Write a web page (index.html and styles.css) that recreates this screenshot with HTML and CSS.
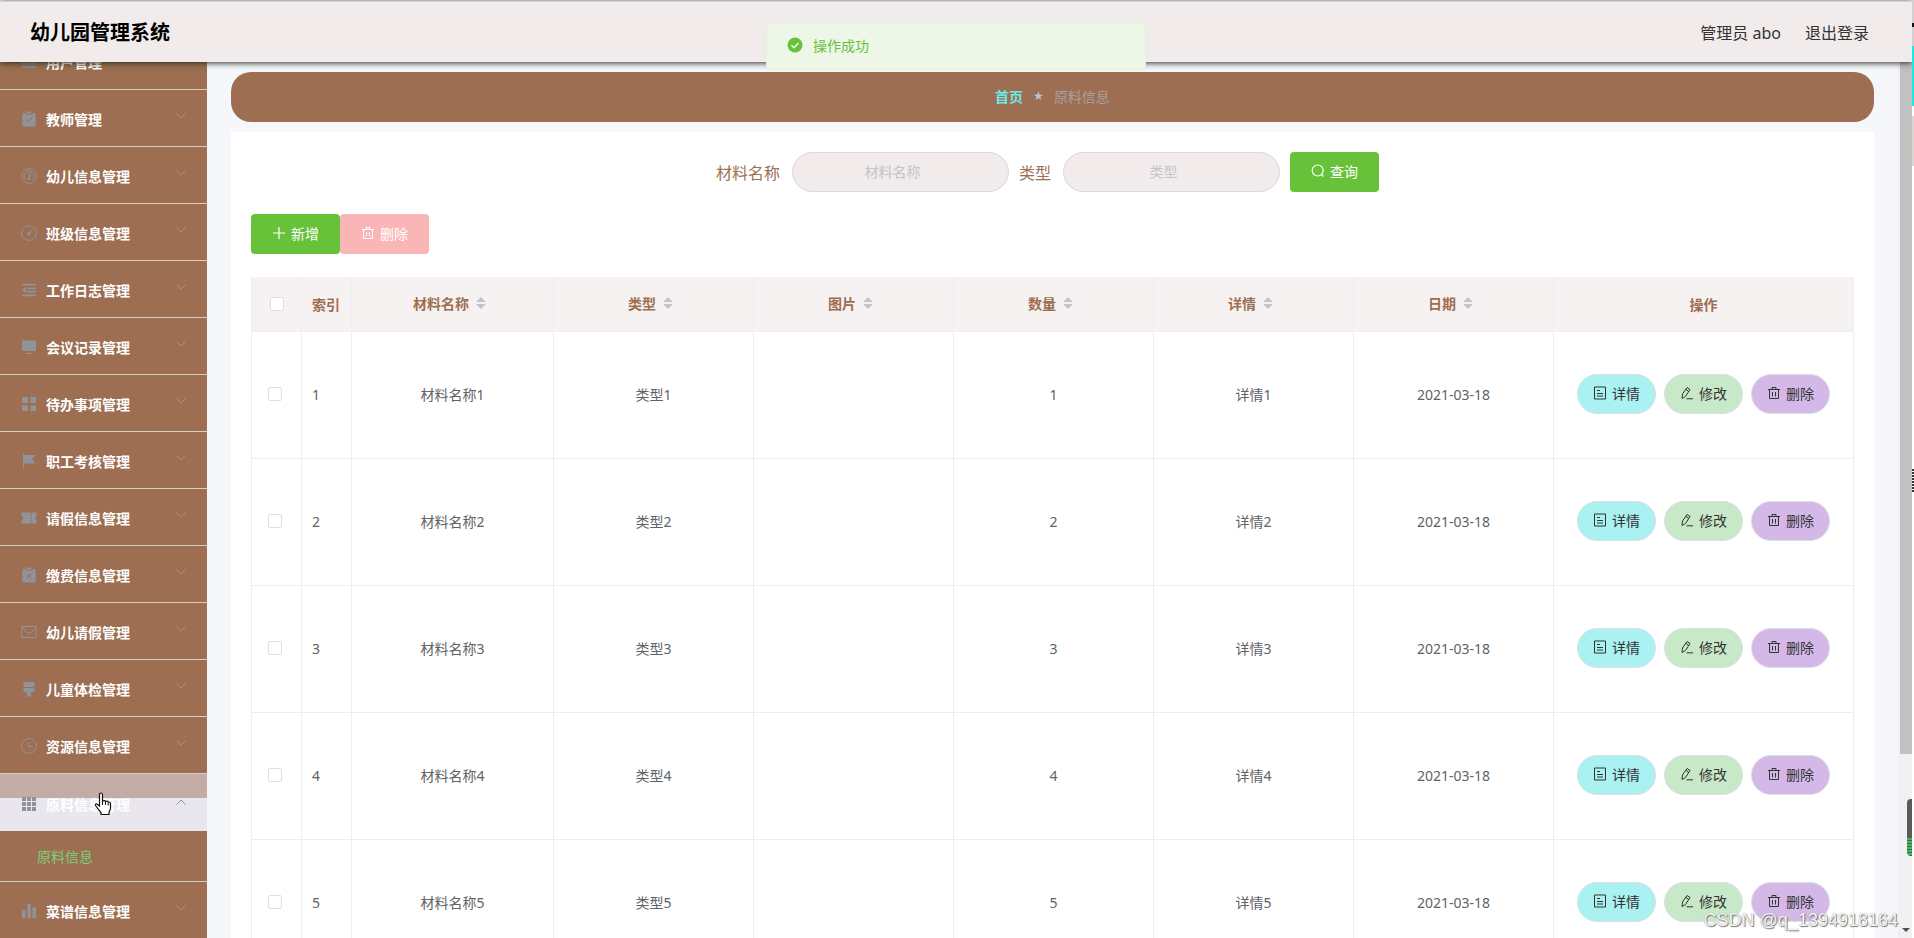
FILE: index.html
```html
<!DOCTYPE html>
<html lang="zh-CN">
<head>
<meta charset="utf-8">
<title>幼儿园管理系统</title>
<link rel="stylesheet" href="styles.css">
</head>
<body>
<svg class="sprite" aria-hidden="true">
  <symbol id="i-list" viewBox="0 0 16 16"><path d="M1 3h14M1 6.300h14M1 9.700h14M1 13h14" stroke="currentColor" stroke-width="1.700" fill="none"/></symbol>
  <symbol id="i-clip" viewBox="0 0 16 16"><path d="M1.500 2h3v1.500h7V2h3v13.500h-13z" fill="currentColor"/><path d="M5.500.5h5v2h-5z" fill="currentColor"/><path d="M5 8.500l2.200 2.300L11 7" stroke="#9d6e51" fill="none"/></symbol>
  <symbol id="i-odo" viewBox="0 0 16 16"><circle cx="8" cy="8" r="7.400" stroke="currentColor" fill="none"/><path d="M4.800 12a5 5 0 1 1 6.400 0" stroke="currentColor" fill="none"/><path d="M8.800 5L8 11" stroke="currentColor" stroke-width="1.600"/><circle cx="7.800" cy="11" r="1.300" fill="currentColor"/></symbol>
  <symbol id="i-compass" viewBox="0 0 16 16"><circle cx="8" cy="8" r="7.400" stroke="currentColor" fill="none"/><path d="M10.800 4.200L9 9.300 6 11.500l1-3.800z" fill="currentColor"/></symbol>
  <symbol id="i-fold" viewBox="0 0 16 16"><path d="M1 2.700h14M6 6.300h9M6 9.700h9M1 13.300h14" stroke="currentColor" stroke-width="1.700"/><path d="M1 8l4-3v6z" fill="currentColor"/></symbol>
  <symbol id="i-screen" viewBox="0 0 16 16"><path d="M1 1.500h14V12H1zM3.500 15q4.500-2.500 9 0z" fill="currentColor"/></symbol>
  <symbol id="i-menu" viewBox="0 0 16 16"><path d="M1 1h6v6H1zM9.500 1h5.500v6H9.500zM1 9.500h6V15H1zM9.500 9.500h5.500V15H9.500z" fill="currentColor"/></symbol>
  <symbol id="i-flag" viewBox="0 0 16 16"><path d="M2 .8h1V2h11.500L11 6.200l3.500 4.300H3V15.500H2z" fill="currentColor"/></symbol>
  <symbol id="i-ticket" viewBox="0 0 16 16"><path d="M.5 2.500h9.300v1h.8v-1h5v3Q13 8 15.500 10.500v3h-5v-1h-.8v1H.5v-3Q3.500 8 .5 5.500z" fill="currentColor"/><path d="M10.200 4v8" stroke="#9d6e51" stroke-dasharray="2 1"/></symbol>
  <symbol id="i-release" viewBox="0 0 16 16"><path d="M1.500 2h3v1.500h7V2h3v13.500h-13zM5.500.5h5v2h-5z" fill="currentColor"/><path d="M5.500 6.500l5 5m0-5l-5 5" stroke="#9d6e51"/></symbol>
  <symbol id="i-mail" viewBox="0 0 16 16"><path d="M.8 2.500h14.400v11H.8zM1 3l4.500 5.500q2.500 1.500 5 0L15 3" stroke="currentColor" fill="none"/></symbol>
  <symbol id="i-brush" viewBox="0 0 16 16"><path d="M2.500 1h11v5h-11zM2.500 7h11v3q0 1-1 1h-2.500v4.500h-4V11H3.500q-1 0-1-1z" fill="currentColor"/></symbol>
  <symbol id="i-clock" viewBox="0 0 16 16"><circle cx="8" cy="8" r="7.400" stroke="currentColor" fill="none"/><path d="M7.500 4v4.500H12" stroke="currentColor" fill="none"/></symbol>
  <symbol id="i-grid" viewBox="0 0 16 16"><path d="M1 1h4v4H1zM6 1h4v4H6zM11 1h4v4h-4zM1 6h4v4H1zM6 6h4v4H6zM11 6h4v4h-4zM1 11h4v4H1zM6 11h4v4H6zM11 11h4v4h-4z" fill="currentColor"/></symbol>
  <symbol id="i-data" viewBox="0 0 16 16"><path d="M1 7h3.500v8H1zM6.300 1h3.500v14H6.300zM11.500 4.500H15V15h-3.500z" fill="currentColor"/></symbol>
  <symbol id="i-down" viewBox="0 0 12 12"><path d="M1.500 3.500L6 8l4.500-4.500" stroke="currentColor" fill="none"/></symbol>
  <symbol id="i-plus" viewBox="0 0 14 14"><path d="M7 1v12M1 7h12" stroke="currentColor" stroke-width="1.200" fill="none"/></symbol>
  <symbol id="i-trash" viewBox="0 0 14 14"><path d="M1 3.500h12M2.500 3.500v9h9v-9M5 3.500v-2h4v2M5.500 6v4.500M8.500 6v4.500" stroke="currentColor" fill="none"/></symbol>
  <symbol id="i-search" viewBox="0 0 14 14"><circle cx="6.700" cy="6.500" r="5.500" stroke="currentColor" stroke-width="1.200" fill="none"/><path d="M10.500 10.500l2 2" stroke="currentColor" stroke-width="1.200"/></symbol>
  <symbol id="i-doc" viewBox="0 0 14 14"><path d="M1.500 1h11v12h-11zM4 4.500h3M4 7.500h6M4 10h6" stroke="currentColor" fill="none"/></symbol>
  <symbol id="i-edit" viewBox="0 0 14 14"><path d="M2 12.500l.5-4.500 4.500-6.500 3 2L5.500 10.500 2 12.500M6 3.500L8.800 5.500M6.500 12.800H13" stroke="currentColor" fill="none"/></symbol>
  <symbol id="i-sort" viewBox="0 0 10 14"><path d="M5 1l5 5H0zM0 8h10l-5 5z" fill="currentColor"/></symbol>
</svg>

<header class="header">
  <h1 class="header-title">幼儿园管理系统</h1>
  <div class="header-user"><span>管理员 abo</span><a class="logout" href="#">退出登录</a></div>
</header>

<div class="message" role="status">
  <svg class="message-icon" viewBox="0 0 16 16"><circle cx="8" cy="8" r="7.500" fill="#67c23a"/><path d="M4.500 8.200l2.500 2.500 4.500-4.700" stroke="#fff" stroke-width="1.300" fill="none"/></svg>
  <span>操作成功</span>
</div>

<div class="body">
  <nav class="sidebar" id="sidebar"></nav>
  <main class="main">
    <div class="breadcrumb"><a class="crumb-home" href="#">首页</a><span class="crumb-star">★</span><span class="crumb-here">原料信息</span></div>
    <section class="card">
      <form class="search">
        <div class="field"><label for="name">材料名称</label><input class="input" id="name" type="text" placeholder="材料名称"></div>
        <div class="field"><label for="type">类型</label><input class="input" id="type" type="text" placeholder="类型"></div>
        <button class="btn btn-success" type="button"><svg class="ico"><use href="#i-search"/></svg>查询</button>
      </form>
      <div class="toolbar">
        <button class="btn btn-success" type="button"><svg class="ico"><use href="#i-plus"/></svg>新增</button>
        <button class="btn btn-danger" type="button" disabled><svg class="ico"><use href="#i-trash"/></svg>删除</button>
      </div>
      <table class="table">
        <colgroup><col class="c-check"><col class="c-index"><col><col class="c-data"><col class="c-data"><col class="c-data"><col class="c-data"><col class="c-data"><col class="c-ops"></colgroup>
        <thead><tr id="head"></tr></thead>
        <tbody id="rows"></tbody>
      </table>
    </section>
  </main>
  <div class="scroll"><div class="scroll-thumb"></div><svg class="scroll-arrow" viewBox="0 0 8 4"><path d="M0 0h8L4 4z" fill="#505050"/></svg></div>
</div>
<div class="edge"><i class="edge-head"></i><i class="edge-cyan"></i><i class="edge-gray"></i><i class="edge-marks"></i></div>
<div class="widget"></div>
<svg class="cursor" viewBox="0 0 18 24"><path d="M5.500 14V3q0-2 1.500-2t1.500 2v6q2.500-1 3 .5 2-.8 2.700.6 2.300-.4 2.300 2V16q0 2-1.500 4v2.500H7V20.500Q4 17 1.500 13.500 1 11.500 3 12z" fill="#fff" stroke="#111" stroke-width="1.200"/><path d="M8.500 9v4M11.500 10v3M14.200 11v2.500" stroke="#111"/></svg>
<div class="watermark">CSDN @q_1394918164</div>
<script src="app.js"></script>
</body>
</html>
```

FILE: styles.css
```css
* { box-sizing: border-box; }
body { margin: 0; height: 100vh; overflow: hidden; display: flex; flex-direction: column; background: #f5f7fa; color: #606266; font-family: "Noto Sans", "Noto Sans CJK SC", sans-serif; font-size: 14px; }
a { color: inherit; text-decoration: none; }
button, input { font: inherit; }
.sprite { position: absolute; width: 0; height: 0; }
.header { flex: none; height: 61px; margin: 1px 2px 0 0; padding: 2px 43px 0 30px; border-top: 1px solid #d6d3d3; background: #f2ebeb; box-shadow: 0 1px 6px #222b22; display: flex; align-items: center; justify-content: space-between; position: relative; z-index: 2; }
.header-title { margin: 0; font-size: 20px; line-height: 28px; font-weight: 700; color: #000; }
.header-user { display: flex; gap: 24px; padding-bottom: 2px; font-size: 16px; color: #333; }
.message { position: absolute; z-index: 3; top: 22px; left: 50%; width: 380px; height: 48px; transform: translateX(-50%); margin-left: -1px; padding: 0 20px 2px; border: 1px solid #e1f3d8; border-radius: 4px; background: #edf6e7; color: #67c23a; display: flex; align-items: center; gap: 10px; }
.message-icon { width: 16px; height: 16px; }
.body { flex: 1; min-height: 0; display: flex; }
.sidebar { width: 207px; flex: none; overflow: hidden; background: #9d6e51; display: flex; flex-direction: column; justify-content: flex-end; }
.menu-item { flex: none; height: 57px; padding: 2px 20px 0; border: 0; border-bottom: 1px solid #d9ccc5; background: transparent; color: #fff; font-weight: 700; display: flex; align-items: center; gap: 8px; text-align: left; }
.menu-item:last-child { margin-bottom: -1px; }
.menu-icon { width: 18px; height: 16px; color: #909399; }
.menu-arrow { width: 12px; height: 12px; margin: 0 0 6px auto; color: #b08f7c; }
.menu-item.open { border-bottom: 0; background: linear-gradient(#c3aca5 24px, #e9e7ed 24px); }
.menu-item.open .menu-arrow { transform: rotate(180deg); color: #909399; margin-bottom: 4px; }
.submenu { flex: none; height: 51px; padding-left: 37px; border-bottom: 1px solid #d9ccc5; color: #79d279; display: flex; align-items: center; }
.main { flex: 1; min-width: 0; overflow: hidden; padding: 10px 24px 0 24px; }
.breadcrumb { height: 50px; padding-bottom: 2px; border-radius: 20px; background: #9d6e51; display: flex; align-items: center; justify-content: center; gap: 10px; }
.crumb-home { color: #6ee8e8; font-weight: 700; }
.crumb-star { color: #c0c4cc; font-size: 12px; font-family: "DejaVu Sans", sans-serif; }
.crumb-here { color: #a89fa3; }
.card { margin-top: 10px; padding: 20px; background: #fff; }
.search { display: flex; justify-content: center; gap: 10px; margin-bottom: 22px; padding-right: 10px; }
.field { display: flex; align-items: center; gap: 12px; font-size: 16px; color: #9d6e51; }
.input { width: 217px; height: 40px; padding: 0 30px 2px 14px; border: 1px solid #dcd8de; border-radius: 20px; background: #f2ebeb; text-align: center; font-size: 14px; color: #606266; }
.input::placeholder { color: #c0c4cc; }
.toolbar { display: flex; margin-bottom: 23px; }
.btn { height: 40px; padding: 0 20px 2px; border: 1px solid transparent; border-radius: 4px; color: #fff; display: inline-flex; align-items: center; justify-content: center; gap: 5px; }
.btn .ico { width: 14px; height: 14px; }
.btn-success { background: #67c23a; }
.btn-danger { background: #fab6b6; }
.table { width: 100%; table-layout: fixed; border-collapse: collapse; }
.c-check, .c-index { width: 50px; }
.c-data { width: 200px; }
.c-ops { width: 300px; }
.table th, .table td { border: 1px solid #ebeef5; padding: 0 10px 2px; text-align: center; }
.table th { height: 54px; background: #f7f2f2; border-top-color: #f7f2f2; color: #9d6e51; font-weight: 700; }
.table td { height: 127px; }
.table .left { text-align: left; }
.th-inner { display: flex; align-items: center; justify-content: center; gap: 7px; padding: 0 6px 2px 0; }
.sort { width: 10px; height: 14px; color: #c0c4cc; }
.check { appearance: none; display: block; width: 14px; height: 14px; margin: 0 auto; border: 1px solid #dcdfe6; border-radius: 2px; background: #fff; }
td .check { margin-left: 6px; }
.ops { display: flex; justify-content: center; gap: 8px; }
.pill { width: 79px; padding: 0 0 2px; border-color: #dcdfe6; border-radius: 20px; color: #333; }
.pill-view { background: #aaf1f2; }
.pill-edit { background: #c8e9c7; }
.pill-del { background: #d4b8e7; }
.scroll { flex: none; width: 14px; margin-right: 2px; padding-left: 2px; background: #f1f1f1; display: flex; flex-direction: column; justify-content: space-between; }
.scroll-thumb { height: 79%; background: #c1c1c1; }
.scroll-arrow { width: 8px; height: 4px; margin: 0 0 6px 2px; }
.edge { position: absolute; z-index: 3; right: 0; top: 0; bottom: 0; width: 2px; background: #fff; }
.edge i { display: block; }
.edge-head { height: 46px; background: linear-gradient(#d6cfcf 23px, #111 23px 27px, #d6cfcf 27px); }
.edge-cyan { height: 60px; background: #1ee9e6; }
.edge-gray { height: 50px; margin-top: 10px; background: #ddd4d4; }
.edge-marks { height: 24px; margin-top: 303px; background: repeating-linear-gradient(#333 0 2px, #fff 2px 3px); }
.widget { position: absolute; z-index: 3; right: 2px; top: 799px; width: 5px; height: 57px; border-radius: 4px 0 0 4px; background: linear-gradient(#5a5a5a 39px, transparent 39px), repeating-linear-gradient(#45b565 0 2px, #3b6b48 2px 3px); }
.cursor { position: absolute; z-index: 4; left: 94px; top: 792px; width: 18px; height: 24px; }
.watermark { position: absolute; z-index: 5; right: 16px; bottom: 7px; font-family: "Liberation Sans", Arial, sans-serif; font-size: 18px; line-height: 22px; color: #f4f4f4; text-shadow: 1px 1px 1px #777, 0 0 1px #888; }
```

FILE: app.js
```js
const menu = [['list','用户管理'],['clip','教师管理'],['odo','幼儿信息管理'],['compass','班级信息管理'],['fold','工作日志管理'],['screen','会议记录管理'],['menu','待办事项管理'],['flag','职工考核管理'],['ticket','请假信息管理'],['release','缴费信息管理'],['mail','幼儿请假管理'],['brush','儿童体检管理'],['clock','资源信息管理'],['grid','原料信息管理'],['data','菜谱信息管理']];
document.getElementById('sidebar').innerHTML = menu.map(([icon, text]) => {
  const open = icon === 'grid';
  return `<button type="button" class="menu-item${open ? ' open' : ''}"><svg class="menu-icon"><use href="#i-${icon}"/></svg><span>${text}</span><svg class="menu-arrow"><use href="#i-down"/></svg></button>` + (open ? '<a class="submenu" href="#">原料信息</a>' : '');
}).join('');
const sortable = ['材料名称','类型','图片','数量','详情','日期'];
document.getElementById('head').innerHTML = '<th><input class="check" type="checkbox" aria-label="全选"></th><th class="left">索引</th>' +
  sortable.map(t => `<th><div class="th-inner">${t}<svg class="sort"><use href="#i-sort"/></svg></div></th>`).join('') + '<th>操作</th>';
const op = (kind, icon, text) => `<button type="button" class="btn pill pill-${kind}"><svg class="ico"><use href="#i-${icon}"/></svg>${text}</button>`;
document.getElementById('rows').innerHTML = [1,2,3,4,5].map(n =>
  `<tr><td><input class="check" type="checkbox" aria-label="选择第${n}行"></td><td class="left">${n}</td><td>材料名称${n}</td><td>类型${n}</td><td></td><td>${n}</td><td>详情${n}</td><td>2021-03-18</td><td><div class="ops">${op('view','doc','详情')}${op('edit','edit','修改')}${op('del','trash','删除')}</div></td></tr>`).join('');
```
